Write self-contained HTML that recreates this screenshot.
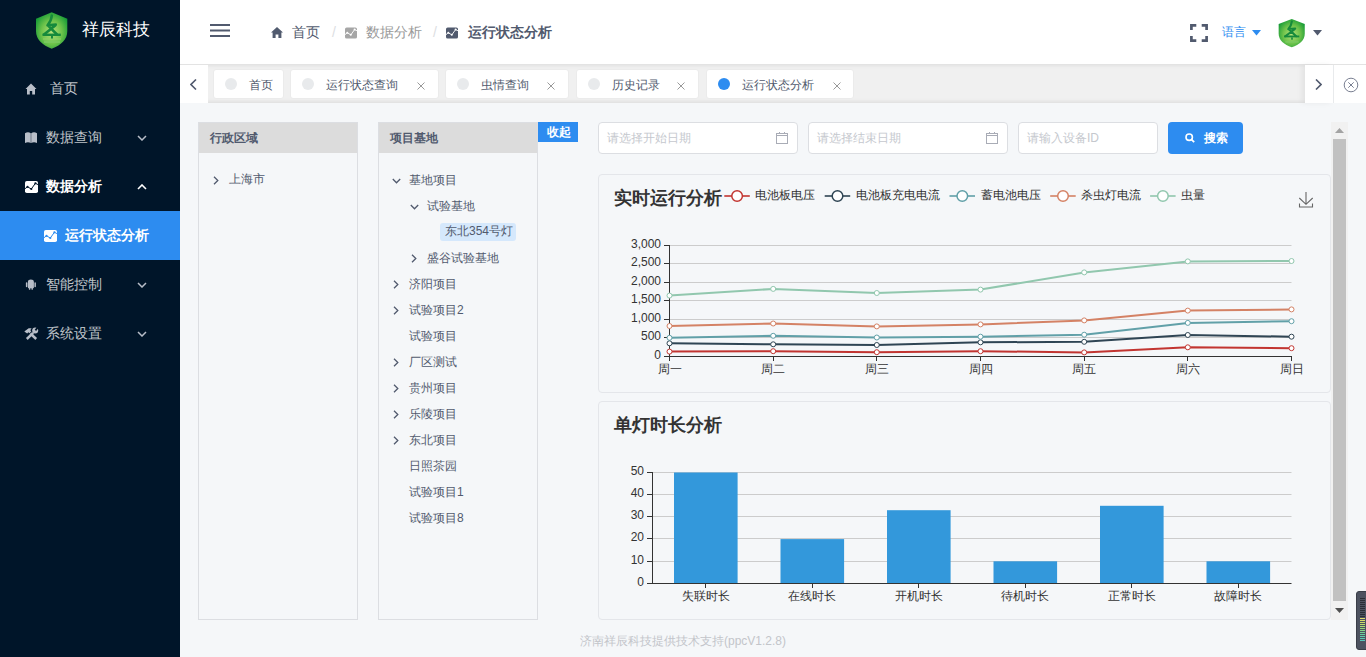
<!DOCTYPE html>
<html><head><meta charset="utf-8">
<style>
*{margin:0;padding:0;box-sizing:border-box}
html,body{width:1366px;height:657px;overflow:hidden;background:#f5f7f9;font-family:"Liberation Sans",sans-serif;color:#515a6e;font-size:12px}
.abs{position:absolute}
#side{left:0;top:0;width:180px;height:657px;background:#001529}
.mi{position:absolute;left:0;width:180px;height:49px;color:rgba(255,255,255,.76);font-size:14px}
.mi .t{position:absolute;top:0;line-height:49px;white-space:nowrap}
.mi svg{position:absolute}
#header{left:180px;top:0;width:1186px;height:64px;background:#fff}
#tabs{left:180px;top:64px;width:1186px;height:39px;background:#f0f0f0;box-shadow:inset 0 0 3px 2px rgba(100,100,100,.1)}
.tab{position:absolute;top:5px;height:30px;border:1px solid #ebebeb;background:#fff;border-radius:3px;font-size:12px;color:#515a6e}
.tab .dot{position:absolute;left:11px;top:8px;width:12px;height:12px;border-radius:50%;background:#e8eaec}
.tab .tt{position:absolute;top:0;line-height:30px;white-space:nowrap}
.tab .x{position:absolute;top:0;line-height:30px;color:#999}
.panel{position:absolute;top:122px;width:160px;height:498px;border:1px solid #dcdee2;background:#f5f7f9}
.panel .ph{height:30px;background:#dcdcdc;line-height:30px;padding-left:11px;font-weight:bold;font-size:12px;color:#515a6e}
.tn{position:absolute;font-size:12px;color:#515a6e;white-space:nowrap;line-height:16px}
.inp{position:absolute;top:122px;height:32px;border:1px solid #dcdee2;border-radius:4px;background:#fff;color:#c5c8ce;font-size:12px;line-height:30px;padding-left:8px}
.card{position:absolute;left:598px;width:733px;border:1px solid #e4e6ea;border-radius:4px;background:#f5f7f9}
</style></head><body>
<div id="side" class="abs">
<svg class="abs" style="left:34px;top:11px" width="36" height="40" viewBox="0 0 36 40">
<defs><radialGradient id="lg1" cx=".5" cy=".55" r=".6"><stop offset="0" stop-color="#b6e27a"/><stop offset=".55" stop-color="#6cc24a"/><stop offset="1" stop-color="#149a36"/></radialGradient></defs>
<path d="M17.7 1.2 L33.3 7.7 L33.3 20 C33.3 29 27 34 17.7 37.8 C8.5 34 2 29 2 20 L2 7.7 Z" fill="url(#lg1)"/>
<path d="M17.8 4.5 C17.5 8 16.5 11 13.5 14.3 L21.8 13.6 M14.2 14.6 L23 23.5 M21.2 14.6 L10 23.5" fill="none" stroke="#168a3c" stroke-width="2.6" stroke-linejoin="round" stroke-linecap="round"/>
<rect x="8.5" y="22.6" width="18.3" height="2.4" fill="#168a3c"/>
<rect x="17" y="25" width="2" height="3" fill="#168a3c"/>
<rect x="9" y="27.5" width="18" height="1" fill="#8fd46a"/>
<rect x="10" y="29.5" width="16" height="2.5" fill="#7ccb62" opacity=".8"/>
</svg>
<div class="abs" style="left:82px;top:18px;font-size:17px;color:#fff;line-height:24px;white-space:nowrap">祥辰科技</div>
<div class="mi" style="top:64px">
 <svg style="left:25px;top:19px" width="12" height="12" viewBox="0 0 12 12"><path d="M6 0.5 L0.5 6 L2 6 L2 11.5 L4.8 11.5 L4.8 8 L7.2 8 L7.2 11.5 L10 11.5 L10 6 L11.5 6 Z" fill="#b8bec8"/></svg>
 <span class="t" style="left:50px">首页</span>
</div>
<div class="mi" style="top:113px">
 <svg style="left:25px;top:19px" width="12" height="11" viewBox="0 0 12 11"><path d="M0 1.2 C2 0 4 0 5.8 1.2 L5.8 11 C4 10 2 10 0 11 Z M6.2 1.2 C8 0 10 0 12 1.2 L12 11 C10 10 8 10 6.2 11 Z" fill="#b8bec8"/></svg>
 <span class="t" style="left:46px">数据查询</span>
 <svg style="left:137px;top:22px" width="10" height="6" viewBox="0 0 10 6"><path d="M1 1 L5 5 L9 1" fill="none" stroke="#b8bec8" stroke-width="1.5"/></svg>
</div>
<div class="mi" style="top:162px;color:#fff;font-weight:bold">
 <svg style="left:25px;top:19px" width="13" height="12" viewBox="0 0 13 12"><rect x="0" y="0" width="13" height="12" rx="1.8" fill="#fff"/><path d="M0 7.7 L2.5 5.8 L6.3 8 L10.4 2.3 L13 3.6" fill="none" stroke="#001529" stroke-width="1"/><circle cx="2.5" cy="5.8" r="1.1" fill="#001529"/><circle cx="6.3" cy="8" r="1.1" fill="#001529"/><circle cx="10.4" cy="2.3" r="1.1" fill="#001529"/></svg>
 <span class="t" style="left:46px">数据分析</span>
 <svg style="left:137px;top:22px" width="10" height="6" viewBox="0 0 10 6"><path d="M1 5 L5 1 L9 5" fill="none" stroke="#fff" stroke-width="1.6"/></svg>
</div>
<div class="mi" style="top:211px;background:#2d8cf0;color:#fff;font-weight:bold">
 <svg style="left:44px;top:19px" width="13" height="12" viewBox="0 0 13 12"><rect x="0" y="0" width="13" height="12" rx="1.8" fill="#fff"/><path d="M0 7.7 L2.5 5.8 L6.3 8 L10.4 2.3 L13 3.6" fill="none" stroke="#2d8cf0" stroke-width="1"/><circle cx="2.5" cy="5.8" r="1.1" fill="#2d8cf0"/><circle cx="6.3" cy="8" r="1.1" fill="#2d8cf0"/><circle cx="10.4" cy="2.3" r="1.1" fill="#2d8cf0"/></svg>
 <span class="t" style="left:65px">运行状态分析</span>
</div>
<div class="mi" style="top:260px">
 <svg style="left:25px;top:19px" width="12" height="12" viewBox="0 0 12 12"><path d="M2.9 3 C2.9 1 4.3 0.4 5.9 0.4 C7.5 0.4 8.9 1 8.9 3 L8.9 8.5 C8.9 9 8.6 9.3 8.1 9.3 L3.7 9.3 C3.2 9.3 2.9 9 2.9 8.5 Z" fill="#b8bec8"/><rect x="0.9" y="3.2" width="1.5" height="5" rx=".75" fill="#b8bec8"/><rect x="9.4" y="3.2" width="1.5" height="5" rx=".75" fill="#b8bec8"/><rect x="3.9" y="8.5" width="1.4" height="2.3" rx=".6" fill="#b8bec8"/><rect x="6.5" y="8.5" width="1.4" height="2.3" rx=".6" fill="#b8bec8"/></svg>
 <span class="t" style="left:46px">智能控制</span>
 <svg style="left:137px;top:22px" width="10" height="6" viewBox="0 0 10 6"><path d="M1 1 L5 5 L9 1" fill="none" stroke="#b8bec8" stroke-width="1.5"/></svg>
</div>
<div class="mi" style="top:309px">
 <svg style="left:24px;top:17px" width="15" height="14" viewBox="0 0 15 14"><path d="M6.4 7.5 L12.2 13" stroke="#b8bec8" stroke-width="2.5"/><path d="M0.3 5.5 L4.7 2.2 L7.6 2.2 L6.3 4.3 L7.3 5.3 L5.5 7.2 L4.4 6.3 L3.2 7.4 Z" fill="#b8bec8"/><path d="M9.2 6.8 L2.8 13" stroke="#b8bec8" stroke-width="2.5"/><circle cx="11.2" cy="4.6" r="3" fill="#b8bec8"/><path d="M11.4 4.4 L13.6 1.6" stroke="#001529" stroke-width="1.8"/></svg>
 <span class="t" style="left:46px">系统设置</span>
 <svg style="left:137px;top:22px" width="10" height="6" viewBox="0 0 10 6"><path d="M1 1 L5 5 L9 1" fill="none" stroke="#b8bec8" stroke-width="1.5"/></svg>
</div>
</div>
<div id="header" class="abs">
<svg class="abs" style="left:30px;top:24px" width="20" height="13" viewBox="0 0 20 13"><rect x="0" y="0" width="20" height="2" fill="#515a6e"/><rect x="0" y="5.5" width="20" height="2" fill="#515a6e"/><rect x="0" y="11" width="20" height="2" fill="#515a6e"/></svg>
<svg class="abs" style="left:91px;top:27px" width="12" height="11" viewBox="0 0 12 11"><path d="M6 0 L0 5.5 L1.6 5.5 L1.6 11 L4.6 11 L4.6 7.5 L7.4 7.5 L7.4 11 L10.4 11 L10.4 5.5 L12 5.5 Z" fill="#515a6e"/></svg>
<span class="abs" style="left:112px;top:22px;font-size:14px;line-height:20px;color:#515a6e;white-space:nowrap">首页</span>
<span class="abs" style="left:152px;top:22px;font-size:14px;line-height:20px;color:#dcdee2">/</span>
<svg class="abs" style="left:165px;top:27px" width="12" height="12" viewBox="0 0 13 12"><rect x="0" y="0" width="13" height="12" rx="1.8" fill="#a6a6a6"/><path d="M0 7.7 L2.5 5.8 L6.3 8 L10.4 2.3 L13 3.6" fill="none" stroke="#fff" stroke-width="1"/><circle cx="2.5" cy="5.8" r="1.1" fill="#fff"/><circle cx="6.3" cy="8" r="1.1" fill="#fff"/><circle cx="10.4" cy="2.3" r="1.1" fill="#fff"/></svg>
<span class="abs" style="left:186px;top:22px;font-size:14px;line-height:20px;color:#999;white-space:nowrap">数据分析</span>
<span class="abs" style="left:253px;top:22px;font-size:14px;line-height:20px;color:#dcdee2">/</span>
<svg class="abs" style="left:266px;top:27px" width="12" height="12" viewBox="0 0 13 12"><rect x="0" y="0" width="13" height="12" rx="1.8" fill="#515a6e"/><path d="M0 7.7 L2.5 5.8 L6.3 8 L10.4 2.3 L13 3.6" fill="none" stroke="#fff" stroke-width="1"/><circle cx="2.5" cy="5.8" r="1.1" fill="#fff"/><circle cx="6.3" cy="8" r="1.1" fill="#fff"/><circle cx="10.4" cy="2.3" r="1.1" fill="#fff"/></svg>
<span class="abs" style="left:288px;top:22px;font-size:14px;line-height:20px;color:#515a6e;font-weight:bold;white-space:nowrap">运行状态分析</span>
<svg class="abs" style="left:1010px;top:24px" width="18" height="18" viewBox="0 0 18 18"><path d="M1.4 6 L1.4 1.4 L6.3 1.4 M11.7 1.4 L16.6 1.4 L16.6 6 M16.6 12 L16.6 16.6 L11.7 16.6 M6.3 16.6 L1.4 16.6 L1.4 12" fill="none" stroke="#515a6e" stroke-width="2.7"/></svg>
<span class="abs" style="left:1042px;top:22px;font-size:12px;line-height:20px;color:#2d8cf0;white-space:nowrap">语言</span>
<svg class="abs" style="left:1072px;top:30px" width="9" height="6" viewBox="0 0 9 6"><path d="M0 0 L9 0 L4.5 5.5 Z" fill="#2d8cf0"/></svg>
<svg class="abs" style="left:1097px;top:18px" width="30" height="31" viewBox="0 0 36 40" preserveAspectRatio="none">
<defs><radialGradient id="lg2" cx=".5" cy=".55" r=".6"><stop offset="0" stop-color="#b6e27a"/><stop offset=".55" stop-color="#6cc24a"/><stop offset="1" stop-color="#149a36"/></radialGradient></defs>
<path d="M17.7 1.2 L33.3 7.7 L33.3 20 C33.3 29 27 34 17.7 37.8 C8.5 34 2 29 2 20 L2 7.7 Z" fill="url(#lg2)"/>
<path d="M17.8 4.5 C17.5 8 16.5 11 13.5 14.3 L21.8 13.6 M14.2 14.6 L23 23.5 M21.2 14.6 L10 23.5" fill="none" stroke="#168a3c" stroke-width="2.6" stroke-linejoin="round" stroke-linecap="round"/>
<rect x="8.5" y="22.6" width="18.3" height="2.4" fill="#168a3c"/>
<rect x="17" y="25" width="2" height="3" fill="#168a3c"/>
<rect x="10" y="29.5" width="16" height="2.5" fill="#7ccb62" opacity=".8"/>
</svg>
<svg class="abs" style="left:1133px;top:30px" width="9" height="6" viewBox="0 0 9 6"><path d="M0 0 L9 0 L4.5 5.5 Z" fill="#515a6e"/></svg>
</div>
<div id="tabs" class="abs"><div class="abs" style="left:0;top:1px;width:28px;height:38px;background:#fff;z-index:1"><svg class="abs" style="left:10px;top:14px" width="7" height="11" viewBox="0 0 7 11"><path d="M6 0.5 L1 5.5 L6 10.5" fill="none" stroke="#515a6e" stroke-width="1.6"/></svg></div><div class="tab" style="left:33px;width:71px"><span class="dot" style=""></span><span class="tt" style="left:35px">首页</span></div><div class="tab" style="left:110px;width:149px"><span class="dot" style=""></span><span class="tt" style="left:35px">运行状态查询</span><svg class="abs" style="left:126px;top:12px" width="8" height="8" viewBox="0 0 8 8"><path d="M0.5 0.5 L7.5 7.5 M7.5 0.5 L0.5 7.5" stroke="#999" stroke-width="1"/></svg></div><div class="tab" style="left:265px;width:124px"><span class="dot" style=""></span><span class="tt" style="left:35px">虫情查询</span><svg class="abs" style="left:101px;top:12px" width="8" height="8" viewBox="0 0 8 8"><path d="M0.5 0.5 L7.5 7.5 M7.5 0.5 L0.5 7.5" stroke="#999" stroke-width="1"/></svg></div><div class="tab" style="left:396px;width:123px"><span class="dot" style=""></span><span class="tt" style="left:35px">历史记录</span><svg class="abs" style="left:100px;top:12px" width="8" height="8" viewBox="0 0 8 8"><path d="M0.5 0.5 L7.5 7.5 M7.5 0.5 L0.5 7.5" stroke="#999" stroke-width="1"/></svg></div><div class="tab" style="left:526px;width:148px"><span class="dot" style="background:#2d8cf0"></span><span class="tt" style="left:35px">运行状态分析</span><svg class="abs" style="left:126px;top:12px" width="8" height="8" viewBox="0 0 8 8"><path d="M0.5 0.5 L7.5 7.5 M7.5 0.5 L0.5 7.5" stroke="#999" stroke-width="1"/></svg></div><div class="abs" style="left:1125px;top:1px;width:28px;height:38px;background:#fff;box-shadow:-3px 0 6px rgba(0,0,0,.06)"><svg class="abs" style="left:10px;top:14px" width="7" height="11" viewBox="0 0 7 11"><path d="M1 0.5 L6 5.5 L1 10.5" fill="none" stroke="#515a6e" stroke-width="1.6"/></svg></div><div class="abs" style="left:1153px;top:1px;width:1px;height:38px;background:#e8eaec"></div><div class="abs" style="left:1154px;top:1px;width:32px;height:38px;background:#fff"><svg class="abs" style="left:9px;top:12px" width="16" height="16" viewBox="0 0 16 16"><circle cx="8" cy="8" r="6.8" fill="none" stroke="#6a7184" stroke-width=".9"/><path d="M5.3 5.3 L10.7 10.7 M10.7 5.3 L5.3 10.7" stroke="#6a7184" stroke-width=".9"/></svg></div></div>
<div id="content">
<div class="panel" style="left:198px"><div class="ph">行政区域</div></div>
<svg class="abs" style="left:213px;top:176px" width="6" height="9" viewBox="0 0 6 9"><path d="M1 0.8 L4.8 4.5 L1 8.2" fill="none" stroke="#515a6e" stroke-width="1.3"/></svg><span class="tn" style="left:229px;top:171px">上海市</span>
<div class="panel" style="left:378px"><div class="ph">项目基地</div></div>
<div class="abs" style="left:538px;top:122px;width:40px;height:20px;background:#2d8cf0;color:#fff;font-size:12px;font-weight:bold;line-height:20px;text-align:center;padding-left:2px">收起</div>
<svg class="abs" style="left:392px;top:178px" width="9" height="6" viewBox="0 0 9 6"><path d="M0.8 1 L4.5 4.8 L8.2 1" fill="none" stroke="#515a6e" stroke-width="1.3"/></svg><span class="tn" style="left:409.0px;top:171px;line-height:18px">基地项目</span>
<svg class="abs" style="left:410px;top:204px" width="9" height="6" viewBox="0 0 9 6"><path d="M0.8 1 L4.5 4.8 L8.2 1" fill="none" stroke="#515a6e" stroke-width="1.3"/></svg><span class="tn" style="left:427px;top:197px;line-height:18px">试验基地</span>
<div class="abs" style="left:440px;top:223px;width:76px;height:18px;background:#d5e8fc;border-radius:3px"></div><span class="tn" style="left:445px;top:222px;line-height:18px">东北354号灯</span>
<svg class="abs" style="left:411px;top:254px" width="6" height="9" viewBox="0 0 6 9"><path d="M1 0.8 L4.8 4.5 L1 8.2" fill="none" stroke="#515a6e" stroke-width="1.3"/></svg><span class="tn" style="left:427px;top:249px;line-height:18px">盛谷试验基地</span>
<svg class="abs" style="left:393px;top:280px" width="6" height="9" viewBox="0 0 6 9"><path d="M1 0.8 L4.8 4.5 L1 8.2" fill="none" stroke="#515a6e" stroke-width="1.3"/></svg><span class="tn" style="left:409.0px;top:275px;line-height:18px">济阳项目</span>
<svg class="abs" style="left:393px;top:306px" width="6" height="9" viewBox="0 0 6 9"><path d="M1 0.8 L4.8 4.5 L1 8.2" fill="none" stroke="#515a6e" stroke-width="1.3"/></svg><span class="tn" style="left:409.0px;top:301px;line-height:18px">试验项目2</span>
<span class="tn" style="left:409.0px;top:327px;line-height:18px">试验项目</span>
<svg class="abs" style="left:393px;top:358px" width="6" height="9" viewBox="0 0 6 9"><path d="M1 0.8 L4.8 4.5 L1 8.2" fill="none" stroke="#515a6e" stroke-width="1.3"/></svg><span class="tn" style="left:409.0px;top:353px;line-height:18px">厂区测试</span>
<svg class="abs" style="left:393px;top:384px" width="6" height="9" viewBox="0 0 6 9"><path d="M1 0.8 L4.8 4.5 L1 8.2" fill="none" stroke="#515a6e" stroke-width="1.3"/></svg><span class="tn" style="left:409.0px;top:379px;line-height:18px">贵州项目</span>
<svg class="abs" style="left:393px;top:410px" width="6" height="9" viewBox="0 0 6 9"><path d="M1 0.8 L4.8 4.5 L1 8.2" fill="none" stroke="#515a6e" stroke-width="1.3"/></svg><span class="tn" style="left:409.0px;top:405px;line-height:18px">乐陵项目</span>
<svg class="abs" style="left:393px;top:436px" width="6" height="9" viewBox="0 0 6 9"><path d="M1 0.8 L4.8 4.5 L1 8.2" fill="none" stroke="#515a6e" stroke-width="1.3"/></svg><span class="tn" style="left:409.0px;top:431px;line-height:18px">东北项目</span>
<span class="tn" style="left:409.0px;top:457px;line-height:18px">日照茶园</span>
<span class="tn" style="left:409.0px;top:483px;line-height:18px">试验项目1</span>
<span class="tn" style="left:409.0px;top:509px;line-height:18px">试验项目8</span>
<div class="inp" style="left:598px;width:200px">请选择开始日期<svg class="abs" style="left:177px;top:9px" width="13" height="13" viewBox="0 0 13 13"><rect x="0.5" y="1.5" width="11" height="10" fill="none" stroke="#a9acb6" stroke-width="1"/><path d="M0.5 3.5 L11.5 3.5 M3.5 0 L3.5 2 M8.5 0 L8.5 2" stroke="#a9acb6" stroke-width="1"/></svg></div>
<div class="inp" style="left:808px;width:200px">请选择结束日期<svg class="abs" style="left:177px;top:9px" width="13" height="13" viewBox="0 0 13 13"><rect x="0.5" y="1.5" width="11" height="10" fill="none" stroke="#a9acb6" stroke-width="1"/><path d="M0.5 3.5 L11.5 3.5 M3.5 0 L3.5 2 M8.5 0 L8.5 2" stroke="#a9acb6" stroke-width="1"/></svg></div>
<div class="inp" style="left:1018px;width:140px">请输入设备ID</div>
<div class="abs" style="left:1168px;top:122px;width:75px;height:32px;background:#2d8cf0;border-radius:4px"><svg class="abs" style="left:17px;top:11px" width="10" height="10" viewBox="0 0 10 10"><circle cx="4.2" cy="4.2" r="3.2" fill="none" stroke="#fff" stroke-width="1.6"/><path d="M6.6 6.6 L9.2 9.2" stroke="#fff" stroke-width="1.8"/></svg><span class="abs" style="left:36px;top:6px;font-size:12px;line-height:20px;color:#fff;font-weight:bold">搜索</span></div>
<div class="card" style="top:174px;height:219px"></div>
<div class="card" style="top:401px;height:219px"></div>
<svg class="abs" style="left:0;top:0" width="1366" height="657" viewBox="0 0 1366 657" font-family="Liberation Sans, sans-serif">
<text x="614" y="204" font-size="18" font-weight="bold" fill="#333">实时运行分析</text>
<line x1="724.3" y1="196" x2="749.8" y2="196" stroke="#c23531" stroke-width="2" opacity=".8"/><circle cx="737.0999999999999" cy="196" r="5.3" fill="#fff" stroke="#c23531" stroke-width="1.5"/><text x="755.3" y="199" font-size="12" fill="#333">电池板电压</text>
<line x1="824.7" y1="196" x2="850.2" y2="196" stroke="#2f4554" stroke-width="2" opacity=".8"/><circle cx="837.5" cy="196" r="5.3" fill="#fff" stroke="#2f4554" stroke-width="1.5"/><text x="855.7" y="199" font-size="12" fill="#333">电池板充电电流</text>
<line x1="949.5" y1="196" x2="975.0" y2="196" stroke="#61a0a8" stroke-width="2" opacity=".8"/><circle cx="962.3" cy="196" r="5.3" fill="#fff" stroke="#61a0a8" stroke-width="1.5"/><text x="980.5" y="199" font-size="12" fill="#333">蓄电池电压</text>
<line x1="1050.2" y1="196" x2="1075.7" y2="196" stroke="#d48265" stroke-width="2" opacity=".8"/><circle cx="1063.0" cy="196" r="5.3" fill="#fff" stroke="#d48265" stroke-width="1.5"/><text x="1081.2" y="199" font-size="12" fill="#333">杀虫灯电流</text>
<line x1="1150.1" y1="196" x2="1175.6" y2="196" stroke="#91c7ae" stroke-width="2" opacity=".8"/><circle cx="1162.8999999999999" cy="196" r="5.3" fill="#fff" stroke="#91c7ae" stroke-width="1.5"/><text x="1181.1" y="199" font-size="12" fill="#333">虫量</text>
<path d="M1306 192 L1306 204 M1299.3 198 L1306 204.3 L1312.7 198 M1299.5 203.5 L1299.5 207 L1312.5 207 L1312.5 203.5" fill="none" stroke="#666" stroke-width="1.1"/>
<line x1="664" y1="356.5" x2="669.5" y2="356.5" stroke="#333" stroke-width="1"/><text x="661" y="359.0" font-size="12" fill="#333" text-anchor="end">0</text>
<line x1="669.5" y1="337.5" x2="1291.5" y2="337.5" stroke="#ccc" stroke-width="1"/><line x1="664" y1="337.5" x2="669.5" y2="337.5" stroke="#333" stroke-width="1"/><text x="661" y="340.0" font-size="12" fill="#333" text-anchor="end">500</text>
<line x1="669.5" y1="319.5" x2="1291.5" y2="319.5" stroke="#ccc" stroke-width="1"/><line x1="664" y1="319.5" x2="669.5" y2="319.5" stroke="#333" stroke-width="1"/><text x="661" y="322.0" font-size="12" fill="#333" text-anchor="end">1,000</text>
<line x1="669.5" y1="300.5" x2="1291.5" y2="300.5" stroke="#ccc" stroke-width="1"/><line x1="664" y1="300.5" x2="669.5" y2="300.5" stroke="#333" stroke-width="1"/><text x="661" y="303.0" font-size="12" fill="#333" text-anchor="end">1,500</text>
<line x1="669.5" y1="282.5" x2="1291.5" y2="282.5" stroke="#ccc" stroke-width="1"/><line x1="664" y1="282.5" x2="669.5" y2="282.5" stroke="#333" stroke-width="1"/><text x="661" y="285.0" font-size="12" fill="#333" text-anchor="end">2,000</text>
<line x1="669.5" y1="263.5" x2="1291.5" y2="263.5" stroke="#ccc" stroke-width="1"/><line x1="664" y1="263.5" x2="669.5" y2="263.5" stroke="#333" stroke-width="1"/><text x="661" y="266.0" font-size="12" fill="#333" text-anchor="end">2,500</text>
<line x1="669.5" y1="245.5" x2="1291.5" y2="245.5" stroke="#ccc" stroke-width="1"/><line x1="664" y1="245.5" x2="669.5" y2="245.5" stroke="#333" stroke-width="1"/><text x="661" y="248.0" font-size="12" fill="#333" text-anchor="end">3,000</text>
<line x1="669.5" y1="245" x2="669.5" y2="357" stroke="#333" stroke-width="1"/><line x1="669.5" y1="356.5" x2="1291.5" y2="356.5" stroke="#333" stroke-width="1"/>
<line x1="669.5" y1="356" x2="669.5" y2="361" stroke="#333" stroke-width="1"/><text x="669.5" y="373" font-size="12" fill="#333" text-anchor="middle">周一</text>
<line x1="773.5" y1="356" x2="773.5" y2="361" stroke="#333" stroke-width="1"/><text x="773.1666666666666" y="373" font-size="12" fill="#333" text-anchor="middle">周二</text>
<line x1="876.5" y1="356" x2="876.5" y2="361" stroke="#333" stroke-width="1"/><text x="876.8333333333334" y="373" font-size="12" fill="#333" text-anchor="middle">周三</text>
<line x1="980.5" y1="356" x2="980.5" y2="361" stroke="#333" stroke-width="1"/><text x="980.5" y="373" font-size="12" fill="#333" text-anchor="middle">周四</text>
<line x1="1084.5" y1="356" x2="1084.5" y2="361" stroke="#333" stroke-width="1"/><text x="1084.1666666666667" y="373" font-size="12" fill="#333" text-anchor="middle">周五</text>
<line x1="1187.5" y1="356" x2="1187.5" y2="361" stroke="#333" stroke-width="1"/><text x="1187.8333333333335" y="373" font-size="12" fill="#333" text-anchor="middle">周六</text>
<line x1="1291.5" y1="356" x2="1291.5" y2="361" stroke="#333" stroke-width="1"/><text x="1291.5" y="373" font-size="12" fill="#333" text-anchor="middle">周日</text>
<polyline points="669.5,351.6 773.2,351.2 876.8,352.2 980.5,351.2 1084.2,352.4 1187.8,347.3 1291.5,348.2" fill="none" stroke="#c23531" stroke-width="2"/><circle cx="669.5" cy="351.6" r="2.5" fill="#fff" stroke="#c23531" stroke-width="1"/><circle cx="773.2" cy="351.2" r="2.5" fill="#fff" stroke="#c23531" stroke-width="1"/><circle cx="876.8" cy="352.2" r="2.5" fill="#fff" stroke="#c23531" stroke-width="1"/><circle cx="980.5" cy="351.2" r="2.5" fill="#fff" stroke="#c23531" stroke-width="1"/><circle cx="1084.2" cy="352.4" r="2.5" fill="#fff" stroke="#c23531" stroke-width="1"/><circle cx="1187.8" cy="347.3" r="2.5" fill="#fff" stroke="#c23531" stroke-width="1"/><circle cx="1291.5" cy="348.2" r="2.5" fill="#fff" stroke="#c23531" stroke-width="1"/>
<polyline points="669.5,343.3 773.2,344.3 876.8,345 980.5,342.3 1084.2,341.8 1187.8,335 1291.5,336.7" fill="none" stroke="#2f4554" stroke-width="2"/><circle cx="669.5" cy="343.3" r="2.5" fill="#fff" stroke="#2f4554" stroke-width="1"/><circle cx="773.2" cy="344.3" r="2.5" fill="#fff" stroke="#2f4554" stroke-width="1"/><circle cx="876.8" cy="345" r="2.5" fill="#fff" stroke="#2f4554" stroke-width="1"/><circle cx="980.5" cy="342.3" r="2.5" fill="#fff" stroke="#2f4554" stroke-width="1"/><circle cx="1084.2" cy="341.8" r="2.5" fill="#fff" stroke="#2f4554" stroke-width="1"/><circle cx="1187.8" cy="335" r="2.5" fill="#fff" stroke="#2f4554" stroke-width="1"/><circle cx="1291.5" cy="336.7" r="2.5" fill="#fff" stroke="#2f4554" stroke-width="1"/>
<polyline points="669.5,337.8 773.2,335.8 876.8,337.5 980.5,336.7 1084.2,334.7 1187.8,322.9 1291.5,321.2" fill="none" stroke="#61a0a8" stroke-width="2"/><circle cx="669.5" cy="337.8" r="2.5" fill="#fff" stroke="#61a0a8" stroke-width="1"/><circle cx="773.2" cy="335.8" r="2.5" fill="#fff" stroke="#61a0a8" stroke-width="1"/><circle cx="876.8" cy="337.5" r="2.5" fill="#fff" stroke="#61a0a8" stroke-width="1"/><circle cx="980.5" cy="336.7" r="2.5" fill="#fff" stroke="#61a0a8" stroke-width="1"/><circle cx="1084.2" cy="334.7" r="2.5" fill="#fff" stroke="#61a0a8" stroke-width="1"/><circle cx="1187.8" cy="322.9" r="2.5" fill="#fff" stroke="#61a0a8" stroke-width="1"/><circle cx="1291.5" cy="321.2" r="2.5" fill="#fff" stroke="#61a0a8" stroke-width="1"/>
<polyline points="669.5,326 773.2,323.5 876.8,326.4 980.5,324.4 1084.2,320.4 1187.8,310.6 1291.5,309.4" fill="none" stroke="#d48265" stroke-width="2"/><circle cx="669.5" cy="326" r="2.5" fill="#fff" stroke="#d48265" stroke-width="1"/><circle cx="773.2" cy="323.5" r="2.5" fill="#fff" stroke="#d48265" stroke-width="1"/><circle cx="876.8" cy="326.4" r="2.5" fill="#fff" stroke="#d48265" stroke-width="1"/><circle cx="980.5" cy="324.4" r="2.5" fill="#fff" stroke="#d48265" stroke-width="1"/><circle cx="1084.2" cy="320.4" r="2.5" fill="#fff" stroke="#d48265" stroke-width="1"/><circle cx="1187.8" cy="310.6" r="2.5" fill="#fff" stroke="#d48265" stroke-width="1"/><circle cx="1291.5" cy="309.4" r="2.5" fill="#fff" stroke="#d48265" stroke-width="1"/>
<polyline points="669.5,295.6 773.2,288.9 876.8,293 980.5,289.6 1084.2,272.4 1187.8,261.4 1291.5,261" fill="none" stroke="#91c7ae" stroke-width="2"/><circle cx="669.5" cy="295.6" r="2.5" fill="#fff" stroke="#91c7ae" stroke-width="1"/><circle cx="773.2" cy="288.9" r="2.5" fill="#fff" stroke="#91c7ae" stroke-width="1"/><circle cx="876.8" cy="293" r="2.5" fill="#fff" stroke="#91c7ae" stroke-width="1"/><circle cx="980.5" cy="289.6" r="2.5" fill="#fff" stroke="#91c7ae" stroke-width="1"/><circle cx="1084.2" cy="272.4" r="2.5" fill="#fff" stroke="#91c7ae" stroke-width="1"/><circle cx="1187.8" cy="261.4" r="2.5" fill="#fff" stroke="#91c7ae" stroke-width="1"/><circle cx="1291.5" cy="261" r="2.5" fill="#fff" stroke="#91c7ae" stroke-width="1"/>
<text x="614" y="431" font-size="18" font-weight="bold" fill="#333">单灯时长分析</text>
<line x1="647" y1="583.5" x2="652.5" y2="583.5" stroke="#333" stroke-width="1"/><text x="644" y="586.0" font-size="12" fill="#333" text-anchor="end">0</text>
<line x1="652.5" y1="561.5" x2="1291.5" y2="561.5" stroke="#ccc" stroke-width="1"/><line x1="647" y1="561.5" x2="652.5" y2="561.5" stroke="#333" stroke-width="1"/><text x="644" y="564.0" font-size="12" fill="#333" text-anchor="end">10</text>
<line x1="652.5" y1="538.5" x2="1291.5" y2="538.5" stroke="#ccc" stroke-width="1"/><line x1="647" y1="538.5" x2="652.5" y2="538.5" stroke="#333" stroke-width="1"/><text x="644" y="541.0" font-size="12" fill="#333" text-anchor="end">20</text>
<line x1="652.5" y1="516.5" x2="1291.5" y2="516.5" stroke="#ccc" stroke-width="1"/><line x1="647" y1="516.5" x2="652.5" y2="516.5" stroke="#333" stroke-width="1"/><text x="644" y="519.0" font-size="12" fill="#333" text-anchor="end">30</text>
<line x1="652.5" y1="494.5" x2="1291.5" y2="494.5" stroke="#ccc" stroke-width="1"/><line x1="647" y1="494.5" x2="652.5" y2="494.5" stroke="#333" stroke-width="1"/><text x="644" y="497.0" font-size="12" fill="#333" text-anchor="end">40</text>
<line x1="652.5" y1="472.5" x2="1291.5" y2="472.5" stroke="#ccc" stroke-width="1"/><line x1="647" y1="472.5" x2="652.5" y2="472.5" stroke="#333" stroke-width="1"/><text x="644" y="475.0" font-size="12" fill="#333" text-anchor="end">50</text>
<rect x="674.0" y="472.5" width="63.6" height="111.0" fill="#3398db"/><line x1="705.5" y1="583" x2="705.5" y2="588" stroke="#333" stroke-width="1"/><text x="705.8" y="600" font-size="12" fill="#333" text-anchor="middle">失联时长</text>
<rect x="780.5" y="539.1" width="63.6" height="44.4" fill="#3398db"/><line x1="812.5" y1="583" x2="812.5" y2="588" stroke="#333" stroke-width="1"/><text x="812.2" y="600" font-size="12" fill="#333" text-anchor="middle">在线时长</text>
<rect x="887.0" y="510.2" width="63.6" height="73.3" fill="#3398db"/><line x1="918.5" y1="583" x2="918.5" y2="588" stroke="#333" stroke-width="1"/><text x="918.8" y="600" font-size="12" fill="#333" text-anchor="middle">开机时长</text>
<rect x="993.5" y="561.3" width="63.6" height="22.2" fill="#3398db"/><line x1="1025.5" y1="583" x2="1025.5" y2="588" stroke="#333" stroke-width="1"/><text x="1025.2" y="600" font-size="12" fill="#333" text-anchor="middle">待机时长</text>
<rect x="1100.0" y="505.8" width="63.6" height="77.7" fill="#3398db"/><line x1="1131.5" y1="583" x2="1131.5" y2="588" stroke="#333" stroke-width="1"/><text x="1131.8" y="600" font-size="12" fill="#333" text-anchor="middle">正常时长</text>
<rect x="1206.5" y="561.3" width="63.6" height="22.2" fill="#3398db"/><line x1="1238.5" y1="583" x2="1238.5" y2="588" stroke="#333" stroke-width="1"/><text x="1238.2" y="600" font-size="12" fill="#333" text-anchor="middle">故障时长</text>
<line x1="652.5" y1="472" x2="652.5" y2="584" stroke="#333" stroke-width="1"/><line x1="652.5" y1="583.5" x2="1291.5" y2="583.5" stroke="#333" stroke-width="1"/>
</svg>
<div class="abs" style="left:1331px;top:122px;width:17px;height:498px;background:#f1f1f1"></div><div class="abs" style="left:1333px;top:139px;width:13px;height:462px;background:#c1c1c1"></div><svg class="abs" style="left:1335px;top:128px" width="9" height="5" viewBox="0 0 9 5"><path d="M0 5 L9 5 L4.5 0 Z" fill="#a3a3a3"/></svg><svg class="abs" style="left:1335px;top:608px" width="9" height="5" viewBox="0 0 9 5"><path d="M0 0 L9 0 L4.5 5 Z" fill="#505050"/></svg>
<div class="abs" style="left:180px;top:633px;width:1006px;text-align:center;font-size:12px;line-height:16px;color:#c3c5ca">济南祥辰科技提供技术支持(ppcV1.2.8)</div>
<div class="abs" style="left:1356px;top:591px;width:14px;height:59px;background:#4d5260;border-radius:3px;border:1px solid #3a3e48"></div>
<div class="abs" style="left:1360px;top:598px;width:5px;height:1px;background:#2a2e36"></div><div class="abs" style="left:1360px;top:600px;width:5px;height:1px;background:#2a2e36"></div><div class="abs" style="left:1360px;top:602px;width:5px;height:1px;background:#2a2e36"></div><div class="abs" style="left:1360px;top:604px;width:5px;height:1px;background:#2a2e36"></div><div class="abs" style="left:1360px;top:606px;width:5px;height:1px;background:#2a2e36"></div><div class="abs" style="left:1360px;top:608px;width:5px;height:1px;background:#2a2e36"></div><div class="abs" style="left:1360px;top:610px;width:5px;height:1px;background:#2a2e36"></div><div class="abs" style="left:1360px;top:612px;width:5px;height:1px;background:#2a2e36"></div><div class="abs" style="left:1360px;top:614px;width:5px;height:1px;background:#2a2e36"></div><div class="abs" style="left:1360px;top:616px;width:5px;height:1px;background:#2a2e36"></div><div class="abs" style="left:1360px;top:618px;width:5px;height:1px;background:#e0dc6a"></div><div class="abs" style="left:1360px;top:620px;width:5px;height:1px;background:#d8dc68"></div><div class="abs" style="left:1360px;top:622px;width:5px;height:1px;background:#cadc6a"></div><div class="abs" style="left:1360px;top:624px;width:5px;height:1px;background:#bcdc6e"></div><div class="abs" style="left:1360px;top:626px;width:5px;height:1px;background:#a8da74"></div><div class="abs" style="left:1360px;top:628px;width:5px;height:1px;background:#96d67c"></div><div class="abs" style="left:1360px;top:630px;width:5px;height:1px;background:#84d488"></div><div class="abs" style="left:1360px;top:632px;width:5px;height:1px;background:#74d094"></div><div class="abs" style="left:1360px;top:634px;width:5px;height:1px;background:#68cea0"></div><div class="abs" style="left:1360px;top:636px;width:5px;height:1px;background:#60cca8"></div><div class="abs" style="left:1360px;top:638px;width:5px;height:1px;background:#5ac9b2"></div><div class="abs" style="left:1360px;top:640px;width:5px;height:1px;background:#56c6ba"></div>
</div>
</body></html>
